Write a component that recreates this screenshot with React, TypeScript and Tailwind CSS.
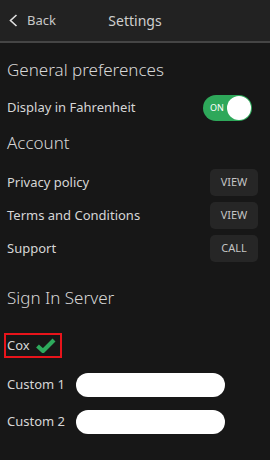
import React from "react";

const font = { fontFamily: '"Noto Sans", "Open Sans", sans-serif' };

function Btn({ label }: { label: string }) {
  return (
    <div className="w-[48px] h-[27px] rounded-[5px] bg-[#262626] flex items-center justify-center text-[11px] text-[#c4c4c4]">
      {label}
    </div>
  );
}

export default function App() {
  return (
    <div className="w-[270px] h-[460px] bg-[#171717] text-[#d6d6d6] overflow-hidden" style={font}>
      <div className="h-[43px] bg-[#222222] border-b-2 border-[#454545] relative flex items-center">
        <div className="flex items-center pl-[9px] gap-[9px]">
          <svg width="9" height="13" viewBox="0 0 9 13" fill="none">
            <path d="M7.5 1 L1.5 6.5 L7.5 12" stroke="#e0e0e0" strokeWidth="1.6" />
          </svg>
          <span className="text-[13px] text-[#c8c8c8]">Back</span>
        </div>
        <div className="absolute left-0 right-0 text-center text-[14px] text-[#cfcfcf] pointer-events-none">Settings</div>
      </div>
      <div className="pl-[7px] pt-[7px]">
        <div className="h-[40px] flex items-center text-[17px] font-light">General preferences</div>
        <div className="h-[36px] flex items-center justify-between pr-[18px]">
          <span className="text-[13px]">Display in Fahrenheit</span>
          <div className="w-[49px] h-[26px] rounded-full bg-[#2ea85a] flex items-center justify-between pl-[7px] pr-[1px]">
            <span className="text-[9px] text-white">ON</span>
            <div className="w-[24px] h-[24px] rounded-full bg-white" />
          </div>
        </div>
        <div className="h-[34px] flex items-center text-[17px] font-light">Account</div>
        <div className="mt-[6px] flex flex-col pr-[12px]">
          <div className="h-[33px] flex items-center justify-between">
            <span className="text-[13px]">Privacy policy</span>
            <Btn label="VIEW" />
          </div>
          <div className="h-[33px] flex items-center justify-between">
            <span className="text-[13px]">Terms and Conditions</span>
            <Btn label="VIEW" />
          </div>
          <div className="h-[33px] flex items-center justify-between">
            <span className="text-[13px]">Support</span>
            <Btn label="CALL" />
          </div>
        </div>
        <div className="mt-[16px] h-[34px] flex items-center text-[17px] font-light">Sign In Server</div>
        <div className="mt-[18px] -ml-[3px] w-[58px] h-[25px] border-2 border-[#e8141b] flex items-center pl-[1px] gap-[6px]">
          <span className="text-[13px]">Cox</span>
          <svg width="20" height="15" viewBox="0 0 20 15">
            <path d="M1.5 8 L7 13 L18 2" stroke="#2eaa5c" strokeWidth="4.2" fill="none" strokeLinejoin="round" />
          </svg>
        </div>
        <div className="mt-[15px] h-[24px] flex items-center">
          <span className="text-[13px] w-[69px]">Custom 1</span>
          <div className="w-[149px] h-[24px] rounded-full bg-white" />
        </div>
        <div className="mt-[13px] h-[24px] flex items-center">
          <span className="text-[13px] w-[69px]">Custom 2</span>
          <div className="w-[149px] h-[24px] rounded-full bg-white" />
        </div>
      </div>
    </div>
  );
}
